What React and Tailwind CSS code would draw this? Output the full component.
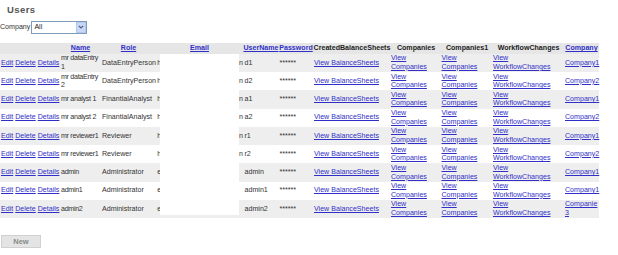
import React from "react";

const users = [
  { name: ["mr dataEntry", "1"], role: "DataEntryPerson", email: "h", emailEnd: "n", user: "d1", company: ["Company1"] },
  { name: ["mr dataEntry", "2"], role: "DataEntryPerson", email: "h", emailEnd: "n", user: "d2", company: ["Company2"] },
  { name: ["mr analyst 1"], role: "FinantialAnalyst", email: "h", emailEnd: "n", user: "a1", company: ["Company1"] },
  { name: ["mr analyst 2"], role: "FinantialAnalyst", email: "h", emailEnd: "n", user: "a2", company: ["Company2"] },
  { name: ["mr reviewer1"], role: "Reviewer", email: "h", emailEnd: "n", user: "r1", company: ["Company1"] },
  { name: ["mr reviewer1"], role: "Reviewer", email: "h", emailEnd: "n", user: "r2", company: ["Company2"] },
  { name: ["admin"], role: "Administrator", email: "e", emailEnd: "", user: "admin", company: ["Company1"] },
  { name: ["admin1"], role: "Administrator", email: "e", emailEnd: "", user: "admin1", company: ["Company1"] },
  { name: ["admin2"], role: "Administrator", email: "e", emailEnd: "", user: "admin2", company: ["Companie", "3"] },
];

const link = "text-[#3030c8] underline";

const Lines = ({ lines }) =>
  lines.map((l, i) => (
    <React.Fragment key={i}>
      {i > 0 && <br />}
      {l}
    </React.Fragment>
  ));

const App = () => {
  return (
    <div
      className="w-[618px] h-[255px] bg-white text-[#333] text-[7.1px] leading-[8.6px] overflow-hidden"
      style={{ fontFamily: '"Liberation Sans", Arial, sans-serif' }}
    >
      <div className="pl-[7px] pt-[3.5px] text-[9.5px] leading-[12px] font-bold tracking-[0.4px] text-[#555]">
        Users
      </div>

      {/* company filter */}
      <div className="mt-[5px] flex items-center">
        <span className="text-[7.1px]">Company</span>
        <div className="ml-[1px] w-[56px] h-[13px] border border-[#7f9db9] bg-white flex items-center">
          <span className="flex-1 pl-[2px] text-[#222]">All</span>
          <div className="w-[10px] h-[11px] mr-[0.5px] bg-[#c9d8f5] border border-[#b4c7ee] flex items-center justify-center">
            <svg width="6" height="4" viewBox="0 0 6 4">
              <path d="M0.8 0.8 L3 3 L5.2 0.8" fill="none" stroke="#4d6185" strokeWidth="1.2" />
            </svg>
          </div>
        </div>
      </div>

      {/* users table */}
      <div className="relative mt-[9.7px] w-[599px]">
        <table className="table-fixed w-[599px] border-collapse">
          <colgroup>
            <col className="w-[60px]" />
            <col className="w-[41px]" />
            <col className="w-[55px]" />
            <col className="w-[87px]" />
            <col className="w-[36px]" />
            <col className="w-[34px]" />
            <col className="w-[78px]" />
            <col className="w-[50px]" />
            <col className="w-[52px]" />
            <col className="w-[71px]" />
            <col className="w-[35px]" />
          </colgroup>
          <thead>
            <tr className="h-[10.6px] bg-[#e6e6e6] font-bold whitespace-nowrap">
              <th className="p-0"></th>
              <th className="p-0 text-center"><span className={link}>Name</span></th>
              <th className="p-0 text-center"><span className={link}>Role</span></th>
              <th className="p-0 text-center"><span className={link}>Email</span></th>
              <th className="p-0 text-center"><span className={link}>UserName</span></th>
              <th className="p-0 text-center"><span className={link}>Password</span></th>
              <th className="p-0 text-center text-[#222]">CreatedBalanceSheets</th>
              <th className="p-0 text-center text-[#222]">Companies</th>
              <th className="p-0 text-center text-[#222]">Companies1</th>
              <th className="p-0 text-center text-[#222]">WorkflowChanges</th>
              <th className="p-0 text-center"><span className={link}>Company</span></th>
            </tr>
          </thead>
          <tbody>
            {users.map((u, i) => (
              <tr key={i} className={`h-[18.27px] ${i % 2 === 0 ? "bg-[#eeeeee]" : "bg-white"}`}>
                <td className="px-[1px] py-0 whitespace-nowrap">
                  <span className={link}>Edit</span> <span className={link}>Delete</span>{" "}
                  <span className={link}>Details</span>
                </td>
                <td className="px-[1px] py-0 whitespace-nowrap tracking-[-0.3px]">
                  <Lines lines={u.name} />
                </td>
                <td className="px-[1px] py-0 whitespace-nowrap">{u.role}</td>
                <td className="pl-[1.2px] pr-0 py-0">
                  <div className="flex justify-between">
                    <span>{u.email}</span>
                    <span>{u.emailEnd}</span>
                  </div>
                </td>
                <td className="pl-[1.5px] py-0 whitespace-nowrap">{u.user}</td>
                <td className="pl-[0.5px] py-0">******</td>
                <td className="pl-[1px] py-0 whitespace-nowrap">
                  <span className={link}>View BalanceSheets</span>
                </td>
                <td className="p-0 whitespace-nowrap">
                  <span className={link}>View<br />Companies</span>
                </td>
                <td className="pl-[0.5px] py-0 whitespace-nowrap">
                  <span className={link}>View<br />Companies</span>
                </td>
                <td className="p-0 whitespace-nowrap">
                  <span className={link}>View<br />WorkflowChanges</span>
                </td>
                <td className="pl-[1px] py-0 whitespace-nowrap">
                  <span className={link}><Lines lines={u.company} /></span>
                </td>
              </tr>
            ))}
          </tbody>
        </table>
        {/* redacted email area */}
        <div className="absolute left-[159.5px] top-[11.3px] w-[79px] h-[161px] bg-white" />
      </div>

      <div className="mt-[17.3px] ml-[1px]">
        <button className="w-[40px] h-[12.7px] bg-[#e4e4e4] border border-[#d0d0d0] text-[#8a8a8a] font-bold text-[7.5px] leading-[10px]">
          New
        </button>
      </div>
    </div>
  );
};

export default App;
